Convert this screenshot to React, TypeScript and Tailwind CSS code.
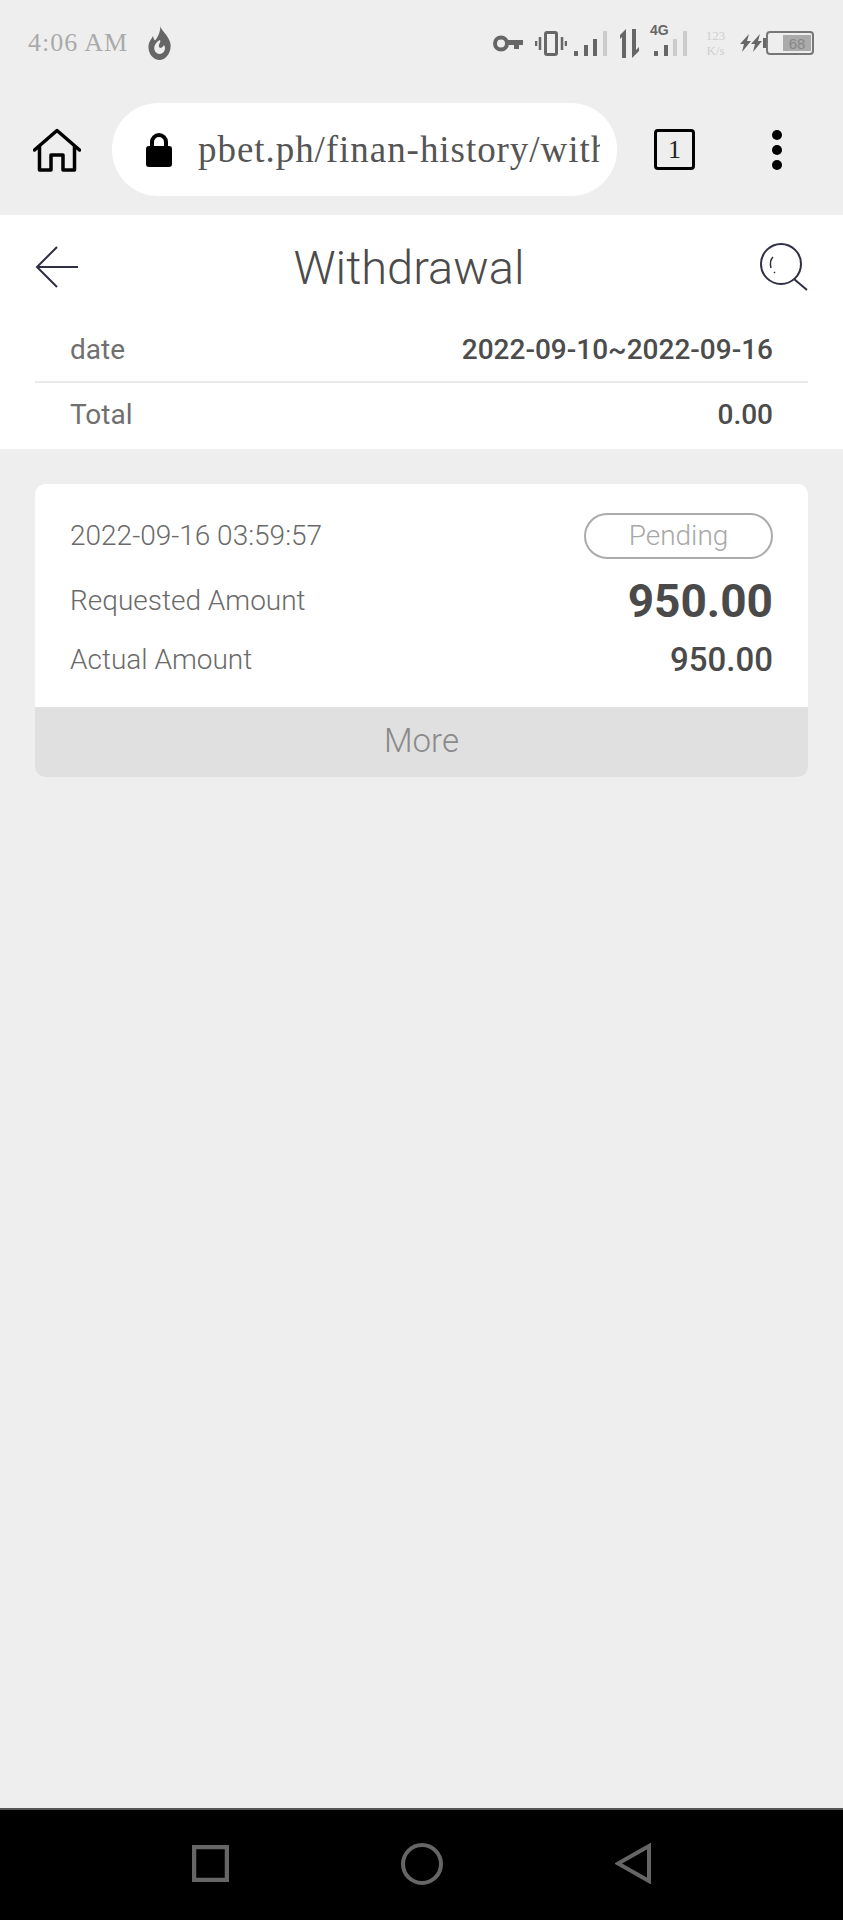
import React from 'react';

const SignalBars = ({ bars = 2 }: { bars?: number }) => (
    <svg width="33" height="25" viewBox="0 0 33 25">
        <rect x="0" y="20" width="4" height="5" fill={bars > 0 ? '#666' : '#ccc'} />
        <rect x="10" y="14" width="4" height="11" fill={bars > 0 ? '#666' : '#ccc'} />
        <rect x="19" y="8" width="4" height="17" fill={bars > 1 ? '#666' : '#ccc'} />
        <rect x="29" y="0" width="4" height="25" fill={bars > 2 ? '#666' : '#ccc'} />
    </svg>
);

const StatusBar = () => (
    <div className="h-[103px] flex items-start justify-between pl-[28px] pr-[29px] pt-[25px]">
        <div className="flex items-center h-[35px]">
            <span className="text-[26px] leading-none text-[#aaaaaa] font-['Liberation_Serif',serif] tracking-[1px] w-[120px]">
                4:06 AM
            </span>
            <svg width="23" height="35" viewBox="0 0 23 35">
                <path
                    d="M12 0c0 5 9 10 10.500 19 1 9-5 16-11 16S0 29 .5 21C1 16 3.500 14 5 11c.5 2 1 3.500 2 4.500C10 12 13 6 12 0z"
                    fill="#666"
                />
                <path d="M12 15c-4 2-6.500 6-5.500 10 1 3.500 5 5 8 3 3-2 3-6 1.500-8-1 2-2.500 3-4 3-1.500-1-1.500-3-.5-4.500 1-1.500 1-2.500.5-3.500z" fill="#eee" />
            </svg>
        </div>
        <div className="flex items-center h-[30px] mt-[3px]">
            <svg width="30" height="17" viewBox="0 0 30 17">
                <circle cx="8" cy="8.500" r="6" fill="none" stroke="#666" strokeWidth="4" />
                <path d="M14 5h16v5h-4v4h-5v-4h-7z" fill="#666" />
            </svg>
            <svg width="32" height="25" viewBox="0 0 32 25" className="ml-[12px]">
                <rect x="10.500" y="1.500" width="11" height="22" rx="1.500" fill="none" stroke="#666" strokeWidth="3" />
                <path d="M1 10v5M5 6v13M27 6v13M31 10v5" stroke="#666" strokeWidth="2.500" />
            </svg>
            <div className="ml-[7px]">
                <SignalBars bars={2} />
            </div>
            <svg width="19" height="29" viewBox="0 0 19 29" className="ml-[13px]">
                <path d="M6 0v29H2V8l-2 2V6zM12 0h4v21l3-3v4l-7 7z" fill="#666" />
            </svg>
            <div className="relative ml-[15px]">
                <span className="absolute left-[-4px] top-[-8px] text-[14px] leading-none font-bold text-[#666] font-['Liberation_Sans',sans-serif]">
                    4G
                </span>
                <SignalBars bars={1} />
            </div>
            <div className="ml-[17px] w-[23px] flex flex-col items-center text-[13px] leading-[15px] text-[#cfcfcf] font-['Liberation_Serif',serif]">
                <span>123</span>
                <span>K/s</span>
            </div>
            <svg width="22" height="18" viewBox="0 0 22 18" className="ml-[13px]">
                <path d="M9 0L0 10h4l-2 8 9-11H7zM20 0l-9 10h4l-2 8 9-11h-4z" fill="#666" />
            </svg>
            <div className="ml-[1px] w-[3px] h-[10px] bg-[#666]" />
            <div className="w-[48px] h-[24px] border-[2px] border-[#777] rounded-[4px] flex justify-end items-center pr-[1px]">
                <div className="w-[28px] h-[16px] bg-[#aaaaaa] flex items-center justify-center text-[15px] leading-none text-[#888] font-['Liberation_Sans',sans-serif]">
                    68
                </div>
            </div>
        </div>
    </div>
);

const BrowserBar = () => (
    <div className="h-[112px] flex pl-[33px] items-start">
        <svg width="48" height="44" viewBox="0 0 48 44" className="mt-[25px] shrink-0">
            <path
                d="M1.500 22L24 2.500 46.500 22M6.500 18v24H18V27h12v15h11.500V18"
                fill="none"
                stroke="#000"
                strokeWidth="3.500"
                strokeLinejoin="round"
                strokeLinecap="round"
            />
        </svg>
        <div className="ml-[31px] w-[505px] h-[93px] shrink-0 bg-white rounded-[46px] flex items-center pl-[34px] pr-[17px]">
            <svg width="26" height="34" viewBox="0 0 26 34" className="shrink-0">
                <path d="M6 15V9a7 7 0 0 1 14 0v6" fill="none" stroke="#000" strokeWidth="4" />
                <rect x="0" y="13" width="26" height="21" rx="3" fill="#000" />
            </svg>
            <div className="ml-[26px] flex-1 min-w-0 overflow-hidden whitespace-nowrap text-[37px] text-[#555] font-['Liberation_Serif',serif] tracking-[0.95px]">
                pbet.ph/finan-history/with
            </div>
        </div>
        <div className="ml-[37px] mt-[26px] w-[41px] h-[41px] shrink-0 border-[3px] border-black rounded-[4px] flex items-center justify-center text-[26px] leading-none text-[#222] font-['Liberation_Serif',serif]">
            1
        </div>
        <div className="ml-[77px] mt-[27px] flex flex-col gap-[5px]">
            <div className="w-[10px] h-[10px] bg-black rounded-full" />
            <div className="w-[10px] h-[10px] bg-black rounded-full" />
            <div className="w-[10px] h-[10px] bg-black rounded-full" />
        </div>
    </div>
);

const Summary = () => (
    <div className="bg-white h-[234px] px-[35px]">
        <div className="h-[104px] flex items-center justify-between">
            <svg width="43" height="42" viewBox="0 0 43 42">
                <path d="M22 1L2 21l20 20M2 21h41" fill="none" stroke="#2e2e44" strokeWidth="2" />
            </svg>
            <h1 className="flex-1 text-center pr-[20px] text-[47px] leading-none font-light text-[#4b4b4b]">Withdrawal</h1>
            <svg width="48" height="48" viewBox="0 0 48 48">
                <ellipse cx="21" cy="21" rx="20" ry="20" fill="none" stroke="#2e2e44" strokeWidth="2" />
                <path d="M34 36l13 11" stroke="#2e2e44" strokeWidth="2" />
                <path d="M13 14c-3 3-3 7-2 11M14 29l1 1" fill="none" stroke="#2e2e44" strokeWidth="1.500" />
            </svg>
        </div>
        <div className="h-[64px] flex items-center justify-between px-[35px] border-b-2 border-[#eaeaea] text-[28px]">
            <span className="text-[#707070]">date</span>
            <span className="font-medium text-[#4c4c4c]">2022-09-10~2022-09-16</span>
        </div>
        <div className="h-[66px] flex items-center justify-between px-[35px] text-[28px] pb-[3px]">
            <span className="text-[#707070]">Total</span>
            <span className="font-medium text-[#4c4c4c]">0.00</span>
        </div>
    </div>
);

const WithdrawalCard = () => (
    <div className="mx-[35px] mt-[35px] rounded-[10px] overflow-hidden bg-white">
        <div className="h-[223px] px-[35px] pt-[29px] text-[28px] font-light text-[#6a6a6a]">
            <div className="h-[46px] flex items-center justify-between">
                <span>2022-09-16 03:59:57</span>
                <span className="w-[189px] h-[46px] rounded-full border-2 border-[#ababab] flex items-center justify-center text-[#a8a8a8]">
                    Pending
                </span>
            </div>
            <div className="mt-[13px] h-[58px] flex items-center justify-between">
                <span>Requested Amount</span>
                <span className="text-[46px] leading-none font-bold text-[#4a4a4a]">950.00</span>
            </div>
            <div className="mt-[4px] h-[52px] flex items-center justify-between">
                <span>Actual Amount</span>
                <span className="text-[33px] leading-none font-medium text-[#4a4a4a] pb-[2px]">950.00</span>
            </div>
        </div>
        <div className="h-[70px] bg-[#e0e0e0] flex items-center justify-center pb-[3px] text-[33px] font-light text-[#8a8a8a]">
            More
        </div>
    </div>
);

const NavBar = () => (
    <div className="h-[112px] bg-black border-t-2 border-[#555] flex items-center justify-center gap-[172px] pb-[3px]">
        <svg width="37" height="37" viewBox="0 0 37 37">
            <rect x="2" y="2" width="33" height="33" fill="none" stroke="#666" strokeWidth="4.500" />
        </svg>
        <svg width="42" height="42" viewBox="0 0 42 42">
            <circle cx="21" cy="21" r="19" fill="none" stroke="#666" strokeWidth="4" />
        </svg>
        <svg width="36" height="41" viewBox="0 0 36 41">
            <path d="M34 3L3 20.500 34 38z" fill="none" stroke="#666" strokeWidth="4" />
        </svg>
    </div>
);

const App: React.FC = () => {
    return (
        <div className="w-[843px] h-[1920px] flex flex-col bg-[#eeeeee] font-['Roboto',sans-serif]">
            <StatusBar />
            <BrowserBar />
            <Summary />
            <div className="flex-1">
                <WithdrawalCard />
            </div>
            <NavBar />
        </div>
    );
};

export default App;
